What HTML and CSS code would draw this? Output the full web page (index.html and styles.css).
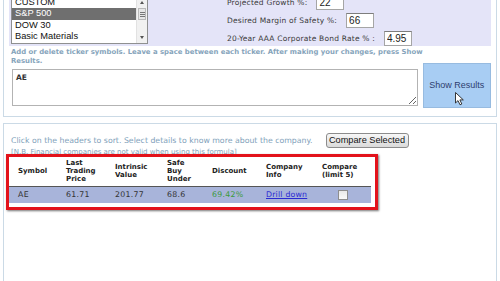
FILE: index.html
```html
<!DOCTYPE html>
<html lang="en">
<head>
    <meta charset="UTF-8">
    <meta name="viewport" content="width=device-width, initial-scale=1.0">
    <title>Stock Screener</title>
    <link rel="stylesheet" href="styles.css">
</head>
<body>
    <div class="page">
        <div class="box search-box">
            <div class="settings">
                <div class="ticker-list">
                    <ul class="list-items">
                        <li>CUSTOM</li>
                        <li class="selected">S&amp;P 500</li>
                        <li>DOW 30</li>
                        <li>Basic Materials</li>
                    </ul>
                    <div class="scrollbar">
                        <span class="arrow up"></span>
                        <span class="thumb"><i></i><i></i><i></i></span>
                        <span class="track"></span>
                        <span class="arrow down"></span>
                    </div>
                </div>

                <div class="params">
                    <div class="param-row">
                        <label for="growth">Projected Growth %:</label>
                        <input type="text" id="growth" value="22">
                    </div>
                    <div class="param-row">
                        <label for="margin">Desired Margin of Safety %:</label>
                        <input type="text" id="margin" value="66">
                    </div>
                    <div class="param-row">
                        <label for="bondRate">20-Year AAA Corporate Bond Rate % :</label>
                        <input type="text" id="bondRate" value="4.95">
                    </div>
                </div>
            </div>

            <div class="ticker-row">
                <div class="ticker-edit">
                    <p class="hint">Add or delete ticker symbols. Leave a space between each ticker. After making your changes, press Show<br>Results.</p>
                    <textarea class="tickers">AE</textarea>
                </div>
                <button class="show-btn">Show Results
                    <svg class="cursor" width="10" height="14" viewBox="0 0 10 14">
                        <path d="M0.5 0.5 L0.5 11 L3 8.6 L5 12.8 L6.8 12 L4.9 7.9 L8.3 7.9 Z" fill="#fff" stroke="#222" stroke-width="0.9" stroke-linejoin="round"/>
                    </svg>
                </button>
            </div>
        </div>

        <div class="box results-box">
            <div class="sort-row">
                <p class="note">Click on the headers to sort. Select details to know more about the company.</p>
                <button class="compare-btn">Compare Selected</button>
            </div>
            <p class="nb">[N.B. Financial companies are not valid when using this formula]</p>

            <div class="highlight">
                <table class="results">
                    <thead>
                        <tr>
                            <th>Symbol</th>
                            <th>Last<br>Trading<br>Price</th>
                            <th>Intrinsic<br>Value</th>
                            <th>Safe<br>Buy<br>Under</th>
                            <th>Discount</th>
                            <th>Company<br>Info</th>
                            <th>Compare<br>(limit 5)</th>
                        </tr>
                    </thead>
                    <tbody>
                        <tr>
                            <td>AE</td>
                            <td>61.71</td>
                            <td>201.77</td>
                            <td>68.6</td>
                            <td class="discount">69.42%</td>
                            <td><a href="#" class="drill">Drill down</a></td>
                            <td><input type="checkbox" class="compare-check"></td>
                        </tr>
                    </tbody>
                </table>
            </div>
        </div>
    </div>
</body>
</html>
```

FILE: styles.css
```css
* {
    margin: 0;
    padding: 0;
    box-sizing: border-box;
}

body {
    background: #fff;
    font-family: 'DejaVu Sans', Verdana, sans-serif;
    color: #333;
    overflow: hidden;
}

.page {
    margin-top: -12px;
    padding: 0 3px;
}

.box {
    width: 494px;
    border: 1px solid #cbdae6;
    padding: 5px 5px 8px 5px;
}

/* top settings panel */
.settings {
    display: flex;
    align-items: flex-start;
    background: #e4e4f8;
    padding: 2px 0 2px 2px;
}

.ticker-list {
    display: flex;
    width: 137px;
    border: 1px solid #8f9090;
    background: #fff;
}

.list-items {
    list-style: none;
    flex: 1;
    font-family: 'Liberation Sans', Arial, sans-serif;
    font-size: 9.3px;
    color: #111;
}

.list-items li {
    height: 11.4px;
    line-height: 11.4px;
    padding-left: 3px;
    white-space: nowrap;
}

.list-items li.selected {
    background: #6f6f6f;
    color: #fff;
}

.scrollbar {
    width: 11px;
    display: flex;
    flex-direction: column;
    background: #f1f1f1;
    border-left: 1px solid #e2e2e2;
}

.arrow {
    height: 11px;
    display: flex;
    align-items: center;
    justify-content: center;
}

.arrow::after {
    content: '';
    border-left: 2.5px solid transparent;
    border-right: 2.5px solid transparent;
}

.arrow.up::after {
    border-bottom: 3px solid #555;
}

.arrow.down::after {
    border-top: 3px solid #555;
}

.thumb {
    height: 12px;
    margin: 0 1px;
    background: #e6e6e6;
    border: 1px solid #b9b9b9;
    display: flex;
    flex-direction: column;
    justify-content: center;
    align-items: center;
    gap: 1px;
}

.thumb i {
    display: block;
    width: 5px;
    height: 1px;
    background: #777;
}

.track {
    flex: 1;
}

.params {
    margin: -1px 0 -3px 79px;
    display: flex;
    flex-direction: column;
    gap: 3px;
}

.param-row {
    display: flex;
    align-items: center;
    gap: 9px;
    height: 15px;
}

.param-row label {
    font-size: 7.5px;
    letter-spacing: 0.2px;
    color: #3a3a3a;
    white-space: nowrap;
}

.param-row input {
    width: 28px;
    height: 15px;
    border: 1px solid #a5a5a5;
    border-top-color: #7d7d7d;
    padding: 0 2px;
    font-family: 'Liberation Sans', Arial, sans-serif;
    font-size: 10px;
    color: #222;
    background: #fff;
}

/* ticker input */
.ticker-row {
    display: flex;
    align-items: flex-end;
}

.ticker-edit {
    flex: 1;
    padding-left: 2px;
}

.hint {
    margin-top: 2px;
    font-size: 6.9px;
    font-weight: bold;
    line-height: 9.5px;
    color: #86a4bb;
    white-space: nowrap;
}

.tickers {
    display: block;
    width: 406px;
    height: 37px;
    margin: 2px 0 2px 1px;
    border: 1px solid #b3b3b3;
    padding: 3px 3px;
    font-family: 'DejaVu Sans', Verdana, sans-serif;
    font-size: 7.5px;
    font-weight: bold;
    color: #333;
}

.show-btn {
    position: relative;
    width: 69px;
    height: 45px;
    background: #a8cdf3;
    border: 1px solid #97bbe0;
    font-family: 'Liberation Sans', Arial, sans-serif;
    font-size: 9px;
    color: #2d3d6e;
}

.cursor {
    position: absolute;
    left: 31px;
    top: 28px;
}

/* results panel */
.results-box {
    margin-top: 6px;
    padding: 9px 5px 0 7px;
    height: 200px;
}

.sort-row {
    display: flex;
    align-items: center;
    gap: 13px;
    height: 15px;
}

.note {
    font-size: 7.8px;
    color: #7f9fba;
    white-space: nowrap;
}

.compare-btn {
    width: 83px;
    height: 15px;
    background: linear-gradient(#f7f7f7, #dadada);
    border: 1px solid #8c8c8c;
    border-radius: 3px;
    font-family: 'Liberation Sans', Arial, sans-serif;
    font-size: 9.2px;
    color: #111;
}

.nb {
    margin-top: 0.5px;
    font-size: 7px;
    line-height: 9px;
    color: #7f9fba;
    white-space: nowrap;
}

.highlight {
    position: relative;
    width: 372px;
    margin: -3px 0 0 -5px;
    border: 3px solid #e3121b;
    background: #fff;
    padding: 0 4px 4px 0;
    box-shadow: 1px 1px 2px rgba(0, 0, 0, 0.55);
}

.results {
    width: 362px;
    border-collapse: collapse;
    table-layout: fixed;
    font-size: 7.8px;
    color: #333;
}

.results th {
    height: 29px;
    padding-left: 9px;
    text-align: left;
    font-size: 7px;
    line-height: 8px;
    font-weight: bold;
    color: #222;
    border-bottom: 1.5px solid #555;
}

.results td {
    height: 17px;
    padding-left: 9px;
    background: #a8b4da;
    letter-spacing: 0.3px;
}

.results th:nth-child(1) { width: 48px; }
.results th:nth-child(2) { width: 49px; }
.results th:nth-child(3) { width: 52px; }
.results th:nth-child(4) { width: 45px; }
.results th:nth-child(5) { width: 54px; }
.results th:nth-child(6) { width: 56px; }
.results th:nth-child(7) { width: 58px; }

.discount {
    color: #3c9a3c;
}

.drill {
    color: #2a2ad2;
    letter-spacing: 0.2px;
}

.compare-check {
    appearance: none;
    display: block;
    width: 10px;
    height: 10px;
    margin-left: 16px;
    border: 1px solid #8e8e8e;
    background: linear-gradient(#e9e9e9, #fafafa);
}
```
